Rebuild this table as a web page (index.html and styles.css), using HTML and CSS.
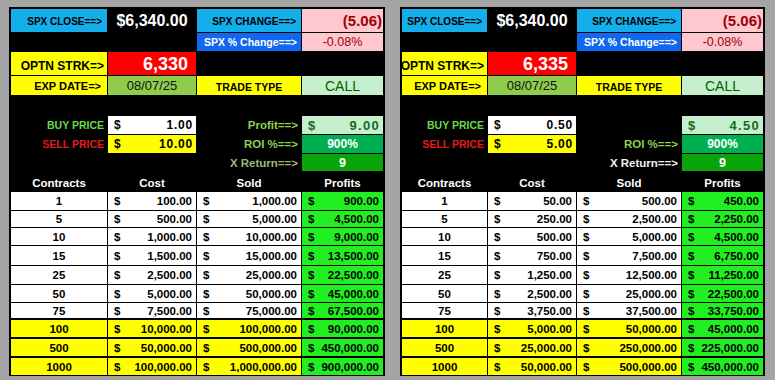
FILE: index.html
```html
<!DOCTYPE html>
<html>
<head>
<meta charset="utf-8">
<link rel="stylesheet" href="styles.css">
</head>
<body>
<div class="sheet">

<div class="panel wide">
  <div class="row h23">
    <div class="cell lbl-blue">SPX CLOSE==&gt;</div>
    <div class="cell close">$6,340.00</div>
    <div class="cell lbl-blue">SPX CHANGE==&gt;</div>
    <div class="cell bad big">(5.06)</div>
  </div>
  <div class="row h18">
    <div class="cell"></div><div class="cell"></div>
    <div class="cell lbl-dblue">SPX % Change==&gt;</div>
    <div class="cell bad pct">-0.08%</div>
  </div>
  <div class="row h23">
    <div class="cell lbl-yel strk">OPTN STRK=&gt;</div>
    <div class="cell strike">6,330</div>
    <div class="cell"></div><div class="cell"></div>
  </div>
  <div class="row h19">
    <div class="cell lbl-yel exp">EXP DATE=&gt;</div>
    <div class="cell date">08/07/25</div>
    <div class="cell lbl-yel type">TRADE TYPE</div>
    <div class="cell good call">CALL</div>
  </div>
  <div class="row h19"></div>
  <div class="row h18">
    <div class="cell side buy">BUY PRICE</div>
    <div class="cell money price white"><span>$</span><span>1.00</span></div>
    <div class="cell side ok">Profit==&gt;</div>
    <div class="cell money profit good"><span>$</span><span>9.00</span></div>
  </div>
  <div class="row h18">
    <div class="cell side sell">SELL PRICE</div>
    <div class="cell money price yellow"><span>$</span><span>10.00</span></div>
    <div class="cell side ok">ROI %==&gt;</div>
    <div class="cell roi">900%</div>
  </div>
  <div class="row h17">
    <div class="cell"></div><div class="cell"></div>
    <div class="cell side xret">X Return==&gt;</div>
    <div class="cell xval">9</div>
  </div>
  <div class="row h19 head">
    <div class="cell">Contracts</div><div class="cell">Cost</div><div class="cell">Sold</div><div class="cell">Profits</div>
  </div>
  <div class="table">
    <div class="row t18"><div class="cell n">1</div><div class="cell money white"><span>$</span><span>100.00</span></div><div class="cell money white"><span>$</span><span>1,000.00</span></div><div class="cell money lime"><span>$</span><span>900.00</span></div></div>
    <div class="row t16"><div class="cell n">5</div><div class="cell money white"><span>$</span><span>500.00</span></div><div class="cell money white"><span>$</span><span>5,000.00</span></div><div class="cell money lime"><span>$</span><span>4,500.00</span></div></div>
    <div class="row t17"><div class="cell n">10</div><div class="cell money white"><span>$</span><span>1,000.00</span></div><div class="cell money white"><span>$</span><span>10,000.00</span></div><div class="cell money lime"><span>$</span><span>9,000.00</span></div></div>
    <div class="row t19"><div class="cell n">15</div><div class="cell money white"><span>$</span><span>1,500.00</span></div><div class="cell money white"><span>$</span><span>15,000.00</span></div><div class="cell money lime"><span>$</span><span>13,500.00</span></div></div>
    <div class="row t18"><div class="cell n">25</div><div class="cell money white"><span>$</span><span>2,500.00</span></div><div class="cell money white"><span>$</span><span>25,000.00</span></div><div class="cell money lime"><span>$</span><span>22,500.00</span></div></div>
    <div class="row t17"><div class="cell n">50</div><div class="cell money white"><span>$</span><span>5,000.00</span></div><div class="cell money white"><span>$</span><span>50,000.00</span></div><div class="cell money lime"><span>$</span><span>45,000.00</span></div></div>
    <div class="row t15"><div class="cell n">75</div><div class="cell money white"><span>$</span><span>7,500.00</span></div><div class="cell money white"><span>$</span><span>75,000.00</span></div><div class="cell money lime"><span>$</span><span>67,500.00</span></div></div>
    <div class="row t17 y"><div class="cell n">100</div><div class="cell money yellow"><span>$</span><span>10,000.00</span></div><div class="cell money yellow"><span>$</span><span>100,000.00</span></div><div class="cell money lime"><span>$</span><span>90,000.00</span></div></div>
    <div class="row t17 y"><div class="cell n">500</div><div class="cell money yellow"><span>$</span><span>50,000.00</span></div><div class="cell money yellow"><span>$</span><span>500,000.00</span></div><div class="cell money lime"><span>$</span><span>450,000.00</span></div></div>
    <div class="row t17 y"><div class="cell n">1000</div><div class="cell money yellow"><span>$</span><span>100,000.00</span></div><div class="cell money yellow"><span>$</span><span>1,000,000.00</span></div><div class="cell money lime"><span>$</span><span>900,000.00</span></div></div>
  </div>
</div>

<div class="panel narrow">
  <div class="row h23">
    <div class="cell lbl-blue">SPX CLOSE==&gt;</div>
    <div class="cell close">$6,340.00</div>
    <div class="cell lbl-blue">SPX CHANGE==&gt;</div>
    <div class="cell bad big">(5.06)</div>
  </div>
  <div class="row h18">
    <div class="cell"></div><div class="cell"></div>
    <div class="cell lbl-dblue">SPX % Change==&gt;</div>
    <div class="cell bad pct">-0.08%</div>
  </div>
  <div class="row h23">
    <div class="cell lbl-yel strk">OPTN STRK=&gt;</div>
    <div class="cell strike">6,335</div>
    <div class="cell"></div><div class="cell"></div>
  </div>
  <div class="row h19">
    <div class="cell lbl-yel exp">EXP DATE=&gt;</div>
    <div class="cell date">08/07/25</div>
    <div class="cell lbl-yel type">TRADE TYPE</div>
    <div class="cell good call">CALL</div>
  </div>
  <div class="row h19"></div>
  <div class="row h18">
    <div class="cell side buy">BUY PRICE</div>
    <div class="cell money price white"><span>$</span><span>0.50</span></div>
    <div class="cell side ok"></div>
    <div class="cell money profit good"><span>$</span><span>4.50</span></div>
  </div>
  <div class="row h18">
    <div class="cell side sell">SELL PRICE</div>
    <div class="cell money price yellow"><span>$</span><span>5.00</span></div>
    <div class="cell side ok">ROI %==&gt;</div>
    <div class="cell roi">900%</div>
  </div>
  <div class="row h17">
    <div class="cell"></div><div class="cell"></div>
    <div class="cell side xret2">X Return==&gt;</div>
    <div class="cell xval">9</div>
  </div>
  <div class="row h19 head">
    <div class="cell">Contracts</div><div class="cell">Cost</div><div class="cell">Sold</div><div class="cell">Profits</div>
  </div>
  <div class="table">
    <div class="row t18"><div class="cell n">1</div><div class="cell money white"><span>$</span><span>50.00</span></div><div class="cell money white"><span>$</span><span>500.00</span></div><div class="cell money lime"><span>$</span><span>450.00</span></div></div>
    <div class="row t16"><div class="cell n">5</div><div class="cell money white"><span>$</span><span>250.00</span></div><div class="cell money white"><span>$</span><span>2,500.00</span></div><div class="cell money lime"><span>$</span><span>2,250.00</span></div></div>
    <div class="row t17"><div class="cell n">10</div><div class="cell money white"><span>$</span><span>500.00</span></div><div class="cell money white"><span>$</span><span>5,000.00</span></div><div class="cell money lime"><span>$</span><span>4,500.00</span></div></div>
    <div class="row t19"><div class="cell n">15</div><div class="cell money white"><span>$</span><span>750.00</span></div><div class="cell money white"><span>$</span><span>7,500.00</span></div><div class="cell money lime"><span>$</span><span>6,750.00</span></div></div>
    <div class="row t18"><div class="cell n">25</div><div class="cell money white"><span>$</span><span>1,250.00</span></div><div class="cell money white"><span>$</span><span>12,500.00</span></div><div class="cell money lime"><span>$</span><span>11,250.00</span></div></div>
    <div class="row t17"><div class="cell n">50</div><div class="cell money white"><span>$</span><span>2,500.00</span></div><div class="cell money white"><span>$</span><span>25,000.00</span></div><div class="cell money lime"><span>$</span><span>22,500.00</span></div></div>
    <div class="row t15"><div class="cell n">75</div><div class="cell money white"><span>$</span><span>3,750.00</span></div><div class="cell money white"><span>$</span><span>37,500.00</span></div><div class="cell money lime"><span>$</span><span>33,750.00</span></div></div>
    <div class="row t17 y"><div class="cell n">100</div><div class="cell money yellow"><span>$</span><span>5,000.00</span></div><div class="cell money yellow"><span>$</span><span>50,000.00</span></div><div class="cell money lime"><span>$</span><span>45,000.00</span></div></div>
    <div class="row t17 y"><div class="cell n">500</div><div class="cell money yellow"><span>$</span><span>25,000.00</span></div><div class="cell money yellow"><span>$</span><span>250,000.00</span></div><div class="cell money lime"><span>$</span><span>225,000.00</span></div></div>
    <div class="row t17 y"><div class="cell n">1000</div><div class="cell money yellow"><span>$</span><span>50,000.00</span></div><div class="cell money yellow"><span>$</span><span>500,000.00</span></div><div class="cell money lime"><span>$</span><span>450,000.00</span></div></div>
  </div>
</div>

</div>
</body>
</html>
```

FILE: styles.css
```css
html, body {
  margin: 0;
  padding: 0;
  background: #a4a4a4;
  width: 775px;
  height: 380px;
  overflow: hidden;
}
body {
  font-family: "Liberation Sans", Arial, sans-serif;
  font-weight: bold;
  color: #000;
}
.sheet {
  display: flex;
  gap: 15px;
  padding: 7px 0 0 9px;
}
.panel {
  background: #000;
  padding: 2px 2px 1px 2px;
  display: flex;
  flex-direction: column;
  gap: 1px;
}
.panel.wide { --c1: 96px; }
.panel.narrow { --c1: 85px; }
.row {
  display: grid;
  grid-template-columns: var(--c1) 88px 104px 81px;
  column-gap: 1px;
}
.table {
  display: flex;
  flex-direction: column;
  gap: 1px;
}
.table .row.y + .row.y,
.table .row.t15 + .row.y { margin-top: 1px; }
.h23 { height: 23px; }
.h19 { height: 19px; }
.h18 { height: 18px; }
.h17 { height: 17px; }
.t19 { height: 19px; }
.t18 { height: 18px; }
.t17 { height: 17px; }
.t16 { height: 16px; }
.t15 { height: 15px; }
.cell {
  display: flex;
  align-items: center;
  padding: 0 4px;
  font-size: 11.5px;
  white-space: nowrap;
  overflow: hidden;
}
.lbl-blue {
  background: #14aeea;
  justify-content: flex-end;
  font-size: 10px;
  padding-right: 5px;
  padding-top: 2px;
}
.lbl-dblue {
  background: #1068f0;
  color: #fff;
  justify-content: flex-end;
  font-size: 10.5px;
  padding-right: 4px;
}
.lbl-yel {
  background: #ffff00;
  justify-content: flex-end;
}
.strk { font-size: 12px; padding-right: 3px; padding-top: 4px; }
.exp { font-size: 11px; padding-right: 6px; padding-top: 1px; }
.type { justify-content: center; font-size: 10.5px; padding-top: 2px; }
.close {
  color: #fff;
  font-size: 16px;
  justify-content: center;
}
.bad {
  background: #ffc7ce;
  color: #9c0006;
}
.big {
  justify-content: flex-end;
  font-size: 15px;
  padding-right: 1px;
}
.pct {
  justify-content: center;
  font-weight: normal;
  font-size: 12.5px;
}
.strike {
  background: #ff0000;
  color: #fff;
  font-size: 18px;
  justify-content: flex-end;
  padding-right: 8px;
  padding-top: 2px;
}
.date {
  background: #8fcc4c;
  font-weight: normal;
  font-size: 13px;
  justify-content: center;
  color: #111;
}
.good {
  background: #c6efce;
  color: #006100;
}
.call {
  justify-content: center;
  font-weight: normal;
  font-size: 14px;
  padding-top: 1px;
}
.side {
  justify-content: flex-end;
  padding-right: 3px;
  font-size: 10.5px;
}
.buy { color: #66d94a; }
.sell { color: #e41a1a; }
.ok { color: #92d050; font-size: 11.5px; }
.xret { color: #9cb87c; font-size: 11.5px; }
.xret2 { color: #f0f0f0; font-size: 11.5px; }
.money {
  justify-content: space-between;
  padding: 0 4px 0 6px;
  font-size: 11.5px;
}
.price { font-size: 12px; letter-spacing: 0.8px; padding-right: 3px; }
.white { background: #fff; }
.yellow { background: #ffff00; }
.lime { background: #22ef22; }
.roi {
  background: #00b050;
  color: #fff;
  justify-content: center;
  font-size: 12px;
}
.xval {
  background: #0aa30a;
  color: #fff;
  justify-content: center;
  font-size: 12.5px;
}
.head .cell {
  color: #fff;
  justify-content: center;
  font-size: 11.5px;
  padding-top: 2px;
}
.n {
  background: #fff;
  justify-content: center;
}
.y .n { background: #ffff00; }
.profit { color: #1a6a1a; font-size: 13px; letter-spacing: 1.3px; padding-right: 3px; }
```
